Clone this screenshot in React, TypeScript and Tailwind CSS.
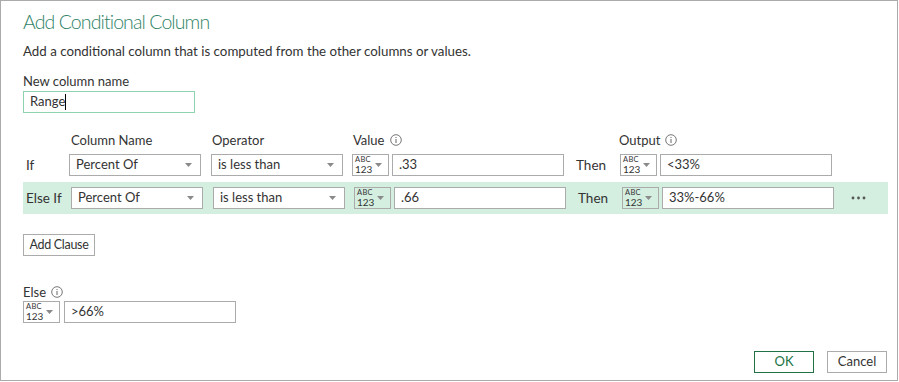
import React from 'react';

const font = { fontFamily: 'Lato, "Noto Sans", sans-serif' };

const Caret = () => (
  <svg width="7" height="4" viewBox="0 0 7 4" className="shrink-0">
    <path d="M0 0h7L3.5 4z" fill="#8a8a8a" />
  </svg>
);

const Info = () => (
  <svg width="12" height="12" viewBox="0 0 12 12" className="ml-[5px] inline-block">
    <circle cx="6" cy="6" r="5.3" fill="none" stroke="#666" strokeWidth="0.9" />
    <rect x="5.5" y="5" width="1" height="4" fill="#666" />
    <rect x="5.5" y="3" width="1" height="1" fill="#666" />
  </svg>
);

const Dots = () => (
  <svg width="15" height="4" viewBox="0 0 15 4" className="ml-[17px]">
    <circle cx="2" cy="2" r="1.4" fill="#555" />
    <circle cx="7.5" cy="2" r="1.4" fill="#555" />
    <circle cx="13" cy="2" r="1.4" fill="#555" />
  </svg>
);

const Select = ({ text, w }: { text: string; w: string }) => (
  <div className={`${w} h-[22px] bg-white border border-[#ababab] flex items-center justify-between pl-[6px] pr-[8px] text-[13px] text-[#333]`}>
    <span>{text}</span>
    <Caret />
  </div>
);

const TypePick = () => (
  <div className="w-[37px] h-[22px] border border-[#ababab] flex items-center pl-[2px] pr-[6px] justify-between">
    <div className="flex flex-col text-[#333]">
      <span className="text-[7.5px] leading-[8px] tracking-[0.3px]">ABC</span>
      <span className="text-[10px] leading-[10px]">123</span>
    </div>
    <Caret />
  </div>
);

const TextBox = ({ text, w }: { text: string; w: string }) => (
  <div className={`${w} h-[22px] bg-white border border-[#ababab] flex items-center pl-[6px] text-[13px] text-[#333]`}>
    {text}
  </div>
);

const ClauseRow = ({ label, labelW, op, value, output, band }: { label: string; labelW: string; op: string; value: string; output: string; band?: boolean }) => (
  <div className={`flex items-center ${band ? 'bg-[#d4eee0] h-[32px]' : 'h-[22px]'} w-[865px]`}>
    <div className={`${labelW} pl-[3px] text-[13.5px] text-[#333]`}>{label}</div>
    <Select text="Percent Of" w="w-[132px]" />
    <div className="w-[10px]" />
    <Select text={op} w="w-[132px]" />
    <div className="w-[9px]" />
    <TypePick />
    <div className="w-[3px]" />
    <TextBox text={value} w="w-[172px]" />
    <div className="w-[56px] pl-[12px] text-[13.5px] text-[#333]">Then</div>
    <TypePick />
    <div className="w-[3px]" />
    <TextBox text={output} w="w-[172px]" />
    {band && <Dots />}
  </div>
);

export default function App() {
  return (
    <div style={font} className="w-[898px] h-[381px] border border-[#ababab] bg-white pl-[22px] pt-[7px] flex flex-col">
      <h1 className="text-[19.5px] font-light tracking-[-0.9px] text-[#2f8266] leading-[28px]">Add Conditional Column</h1>
      <p className="mt-[5px] text-[13.3px] text-[#333] leading-[20px]">
        Add a conditional column that is computed from the other columns or values.
      </p>
      <div className="mt-[12px] text-[13px] text-[#333] leading-[16px]">New column name</div>
      <div className="mt-[2px] w-[172px] h-[22px] border border-[#8fd3ae] flex items-center pl-[6px] text-[13px] text-[#333]">
        Range<span className="w-px h-[16px] bg-black" />
      </div>

      <div className="mt-[19px] flex text-[13px] text-[#333] leading-[16px] h-[16px]">
        <div className="w-[48px]" />
        <div className="w-[141px]">Column Name</div>
        <div className="w-[141px]">Operator</div>
        <div className="w-[266px] flex items-center">Value<Info /></div>
        <div className="flex items-center">Output<Info /></div>
      </div>
      <div className="mt-[6px]">
        <ClauseRow label="If" labelW="w-[46px]" op="is less than" value=".33" output="<33%" />
      </div>
      <div className="mt-[6px]">
        <ClauseRow label="Else If" labelW="w-[48px]" op="is less than" value=".66" output="33%-66%" band />
      </div>

      <button className="mt-[20px] w-[72px] h-[22px] border border-[#ababab] bg-white text-[12.5px] tracking-[-0.3px] text-[#333]" style={font}>
        Add Clause
      </button>

      <div className="mt-[28px] flex items-center text-[13px] text-[#333] leading-[16px]">Else<Info /></div>
      <div className="mt-[1px] flex items-center">
        <TypePick />
        <div className="w-[4px]" />
        <TextBox text=">66%" w="w-[172px]" />
      </div>

      <div className="mt-auto mb-[7px] mr-[10px] flex justify-end gap-[13px]">
        <button className="w-[60px] h-[22px] border border-[#217346] text-[13px] text-[#217346]" style={font}>OK</button>
        <button className="w-[60px] h-[22px] border border-[#ababab] text-[13px] text-[#333]" style={font}>Cancel</button>
      </div>
    </div>
  );
}
